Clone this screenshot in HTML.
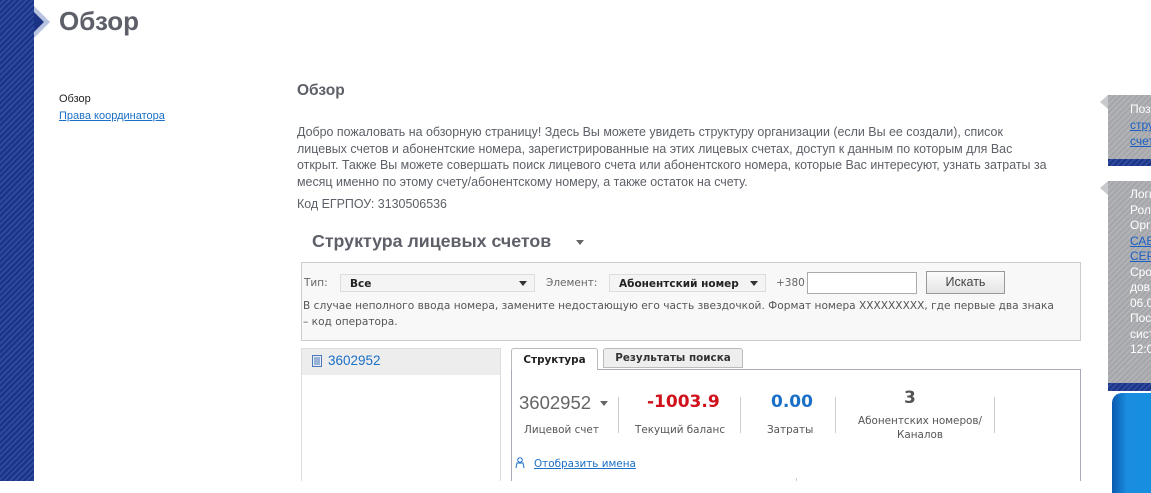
<!DOCTYPE html>
<html><head><meta charset="utf-8"><style>
body{margin:0;width:1151px;height:481px;overflow:hidden;background:#fff;font-family:"Liberation Sans",sans-serif;position:relative}
.a{position:absolute}
.stripe{background:repeating-linear-gradient(135deg,#1b3384 0 2px,#2d4a9e 2px 4px)}
.gp{background:repeating-linear-gradient(135deg,#a4a6aa 0 2px,#b0b2b6 2px 4px);color:#fff;font-size:12px;line-height:16px;padding:6px 0 0 22px;box-sizing:border-box;white-space:nowrap;overflow:hidden}
.gp a{color:#1a5fc4;text-decoration:underline}
.v{font-family:"DejaVu Sans",sans-serif}
.lnk{color:#1a6fc7;text-decoration:underline}
.sel{background:#f4f4f4;border:1px solid #ddd;height:18px;font-weight:bold;font-size:10.5px;line-height:18px;box-sizing:border-box;padding-left:9px;color:#222}
.tri{width:0;height:0;border-left:4px solid transparent;border-right:4px solid transparent;border-top:5px solid #333}
.sep{width:1px;background:#ccc;height:36px}
.num{font-family:"DejaVu Sans",sans-serif;font-weight:bold;font-size:17px}
</style></head><body>
<div class="a stripe" style="left:0;top:0;width:34px;height:481px"></div>
<svg class="a" style="left:30px;top:6px" width="22" height="32"><polygon points="4,0 20,16 4,32 4,26 14,16 4,6" fill="#b7c3df"/><polygon points="4,6 14,16 4,26" fill="#1b3384"/></svg>
<div class="a" style="left:59px;top:6px;font-size:26px;font-weight:bold;color:#5d6068">Обзор</div>
<div class="a" style="left:59px;top:93px;font-size:11px;color:#222">Обзор</div>
<div class="a lnk" style="left:59px;top:110px;font-size:11px">Права координатора</div>
<div class="a" style="left:297px;top:82px;font-size:15.5px;font-weight:bold;color:#5d6068">Обзор</div>
<div class="a" style="left:297px;top:124px;font-size:12.45px;line-height:16.5px;color:#5d6068;white-space:nowrap">Добро пожаловать на обзорную страницу! Здесь Вы можете увидеть структуру организации (если Вы ее создали), список<br>лицевых счетов и абонентские номера, зарегистрированные на этих лицевых счетах, доступ к данным по которым для Вас<br>открыт. Также Вы можете совершать поиск лицевого счета или абонентского номера, которые Вас интересуют, узнать затраты за<br>месяц именно по этому счету/абонентскому номеру, а также остаток на счету.</div>
<div class="a" style="left:297px;top:197px;font-size:12.45px;color:#5d6068">Код ЕГРПОУ: 3130506536</div>
<div class="a" style="left:312px;top:231px;font-size:17.8px;font-weight:bold;color:#5d6068">Структура лицевых счетов</div>
<div class="a tri" style="left:576px;top:240px;border-top-color:#666"></div>
<div class="a v" style="left:301px;top:262px;width:780px;height:79px;background:#f8f8f8;border:1px solid #ccc;box-sizing:border-box"></div>
<div class="a v" style="left:304px;top:277px;font-size:10.5px;color:#666">Тип:</div>
<div class="a v sel" style="left:340px;top:274px;width:195px">Все</div>
<div class="a tri" style="left:519px;top:281px"></div>
<div class="a v" style="left:546px;top:277px;font-size:10.5px;color:#666">Элемент:</div>
<div class="a v sel" style="left:609px;top:274px;width:157px">Абонентский номер</div>
<div class="a tri" style="left:750px;top:281px"></div>
<div class="a v" style="left:776px;top:277px;font-size:10.5px;color:#666">+380</div>
<div class="a" style="left:807px;top:272px;width:110px;height:22px;border:1px solid #aaa;background:#fff;box-sizing:border-box"></div>
<div class="a" style="left:926px;top:271px;width:79px;height:23px;border:1px solid #999;background:linear-gradient(#fbfbfb,#e4e4e4);box-sizing:border-box;font-size:12.5px;color:#444;text-align:center;line-height:21px">Искать</div>
<div class="a v" style="left:303px;top:298px;font-size:10.6px;line-height:16px;color:#555;white-space:nowrap">В случае неполного ввода номера, замените недостающую его часть звездочкой. Формат номера XXXXXXXXX, где первые два знака<br>– код оператора.</div>
<div class="a" style="left:301px;top:348px;width:200px;height:133px;border:1px solid #ddd;border-bottom:none;box-sizing:border-box"></div>
<div class="a" style="left:302px;top:349px;width:198px;height:26px;background:#ededed"></div>
<svg class="a" style="left:312px;top:355px" width="10" height="12"><rect x="0.5" y="0.5" width="9" height="11" fill="#e8eef8" stroke="#4a78b8"/><path d="M2 3h6M2 5h6M2 7h6M2 9h6" stroke="#4a78b8"/></svg>
<div class="a" style="left:328px;top:353px;font-size:13.5px;color:#1a6fc7">3602952</div>
<div class="a" style="left:511px;top:369px;width:570px;height:112px;border:1px solid #aab;border-bottom:none;box-sizing:border-box"></div>
<div class="a v" style="left:511px;top:348px;width:87px;height:22px;background:#fff;border:1px solid #bbb;border-bottom:none;border-radius:3px 3px 0 0;box-sizing:border-box;font-size:10.4px;font-weight:bold;text-align:center;line-height:22px;color:#222">Структура</div>
<div class="a v" style="left:603px;top:348px;width:140px;height:20px;background:#eee;border:1px solid #bbb;border-radius:3px 3px 0 0;box-sizing:border-box;font-size:10.4px;font-weight:bold;text-align:center;line-height:18px;color:#333">Результаты поиска</div>
<div class="a" style="left:519px;top:392px;font-size:18.5px;color:#666">3602952</div>
<div class="a tri" style="left:600px;top:401px;border-top-color:#666"></div>
<div class="a v" style="left:524px;top:424px;font-size:10.4px;color:#555">Лицевой счет</div>
<div class="a sep" style="left:618px;top:397px"></div>
<div class="a num" style="left:647px;top:392px;color:#d0101a">-1003.9</div>
<div class="a v" style="left:635px;top:424px;font-size:10.4px;color:#555">Текущий баланс</div>
<div class="a sep" style="left:740px;top:397px"></div>
<div class="a num" style="left:771px;top:392px;color:#1a6fc7">0.00</div>
<div class="a v" style="left:767px;top:424px;font-size:10.4px;color:#555">Затраты</div>
<div class="a sep" style="left:835px;top:397px"></div>
<div class="a num" style="left:904px;top:388px;color:#555">3</div>
<div class="a v" style="left:845px;top:414px;width:150px;text-align:center;font-size:10.4px;line-height:14px;color:#555">Абонентских номеров/<br>Каналов</div>
<div class="a sep" style="left:994px;top:397px"></div>
<svg class="a" style="left:515px;top:457px" width="10" height="12"><circle cx="5" cy="3" r="2.3" fill="none" stroke="#1a6fc7"/><path d="M1 11 L2 6 H8 L9 11" fill="none" stroke="#1a6fc7"/></svg>
<div class="a v lnk" style="left:534px;top:458px;font-size:10.4px">Отобразить имена</div>
<div class="a" style="left:796px;top:478px;width:1px;height:3px;background:#ccc"></div>
<div class="a gp" style="left:1108px;top:95px;width:43px;height:71px">Поз<br><a>стру</a><br><a>счет</a></div>
<div class="a stripe" style="left:1108px;top:159px;width:43px;height:7px"></div>
<div class="a gp" style="left:1108px;top:181px;width:43px;height:210px;line-height:15.5px">Логи<br>Рол<br>Орг<br><a>САВ</a><br><a>СЕР</a><br>Сро<br>дов<br>06.0<br>Пос<br>сист<br>12:0</div>
<div class="a stripe" style="left:1108px;top:383px;width:43px;height:8px"></div>
<svg class="a" style="left:1100px;top:95px" width="10" height="16"><polygon points="8,0 8,14 0,7" fill="#c8c9cc"/></svg>
<svg class="a" style="left:1100px;top:181px" width="10" height="16"><polygon points="8,0 8,14 0,7" fill="#c8c9cc"/></svg>
<div class="a" style="left:1112px;top:393px;width:50px;height:100px;border-radius:10px 0 0 0;background:linear-gradient(90deg,#0a5ab0,#1a8de0 30%,#1590e0);"></div>
</body></html>
